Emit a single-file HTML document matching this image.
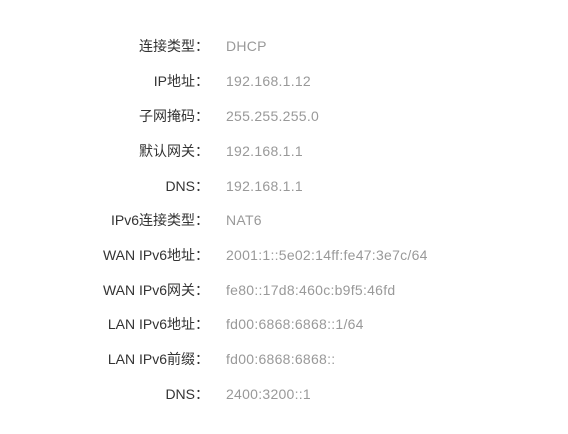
<!DOCTYPE html>
<html><head><meta charset="utf-8"><style>
body{margin:0;width:568px;height:434px;background:#fff;font-family:"Liberation Sans","Noto Sans CJK SC",sans-serif;font-size:14px;}
.r{position:absolute;left:0;width:568px;height:20px;line-height:20px;}
.l{position:absolute;right:359px;color:#333;white-space:nowrap;}
.v{position:absolute;left:226px;color:#999;white-space:nowrap;letter-spacing:0.27px;}
</style></head><body>
<div class="r" style="top:36px"><span class="l">连接类型：</span><span class="v">DHCP</span></div>
<div class="r" style="top:71px"><span class="l">IP地址：</span><span class="v">192.168.1.12</span></div>
<div class="r" style="top:106px"><span class="l">子网掩码：</span><span class="v">255.255.255.0</span></div>
<div class="r" style="top:141px"><span class="l">默认网关：</span><span class="v">192.168.1.1</span></div>
<div class="r" style="top:176px"><span class="l">DNS：</span><span class="v">192.168.1.1</span></div>
<div class="r" style="top:210px"><span class="l">IPv6连接类型：</span><span class="v">NAT6</span></div>
<div class="r" style="top:245px"><span class="l">WAN IPv6地址：</span><span class="v">2001:1::5e02:14ff:fe47:3e7c/64</span></div>
<div class="r" style="top:280px"><span class="l">WAN IPv6网关：</span><span class="v">fe80::17d8:460c:b9f5:46fd</span></div>
<div class="r" style="top:314px"><span class="l">LAN IPv6地址：</span><span class="v">fd00:6868:6868::1/64</span></div>
<div class="r" style="top:349px"><span class="l">LAN IPv6前缀：</span><span class="v">fd00:6868:6868::</span></div>
<div class="r" style="top:384px"><span class="l">DNS：</span><span class="v">2400:3200::1</span></div>
</body></html>
